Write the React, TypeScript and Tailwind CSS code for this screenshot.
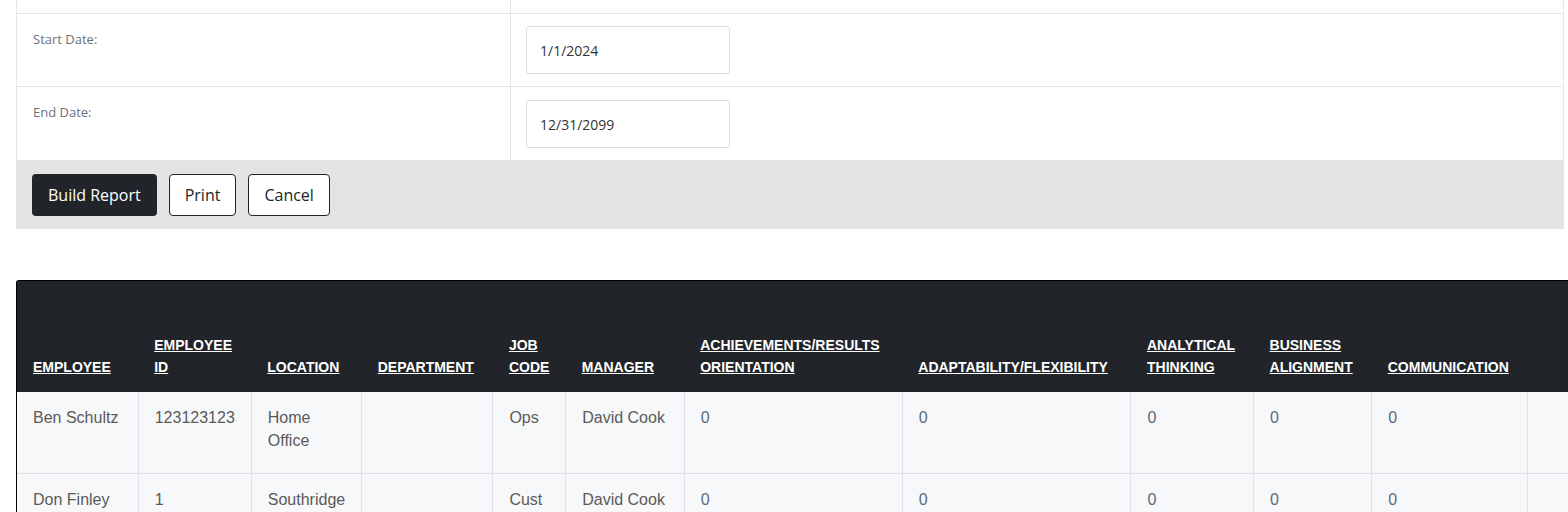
const cols = [
  { w: 128, h: ["EMPLOYEE"] },
  { w: 113, h: ["EMPLOYEE", "ID"] },
  { w: 110, h: ["LOCATION"] },
  { w: 133, h: ["DEPARTMENT"] },
  { w: 73, h: ["JOB", "CODE"] },
  { w: 127, h: ["MANAGER"] },
  { w: 222, h: ["ACHIEVEMENTS/RESULTS", "ORIENTATION"] },
  { w: 233, h: ["ADAPTABILITY/FLEXIBILITY"] },
  { w: 124, h: ["ANALYTICAL", "THINKING"] },
  { w: 120, h: ["BUSINESS", "ALIGNMENT"] },
  { w: 158, h: ["COMMUNICATION"] },
  { w: 120, h: [""] },
];

const rows = [
  ["Ben Schultz", "123123123", "Home Office", "", "Ops", "David Cook", "0", "0", "0", "0", "0", ""],
  ["Don Finley", "1", "Southridge", "", "Cust", "David Cook", "0", "0", "0", "0", "0", ""],
];

export default function App() {
  return (
    <div className="w-[1568px] h-[512px] overflow-hidden bg-white" style={{ fontFamily: "'Open Sans', sans-serif" }}>
      <div className="ml-4 w-[1548px]">
        {/* form rows */}
        <div className="grid grid-cols-[494px_1fr] border-x border-[#e5e5e5]">
          <div className="h-[14px] border-r border-b border-[#e5e5e5]" />
          <div className="h-[14px] border-b border-[#e5e5e5]" />
          <div className="h-[73px] border-r border-b border-[#e5e5e5] px-4 pt-[16px] text-[13px] text-[#6b7280]">Start Date:</div>
          <div className="h-[73px] border-b border-[#e5e5e5] px-[15px] pt-[12px]">
            <div className="w-[204px] h-[48px] border border-[#dcdcdc] rounded-[3px] flex items-center px-[13px] text-[14px] text-[#333]">1/1/2024</div>
          </div>
          <div className="h-[73px] border-r border-[#e5e5e5] px-4 pt-[16px] text-[13px] text-[#6b7280]">End Date:</div>
          <div className="h-[73px] px-[15px] pt-[13px]">
            <div className="w-[204px] h-[48px] border border-[#dcdcdc] rounded-[3px] flex items-center px-[13px] text-[14px] text-[#333]">12/31/2099</div>
          </div>
        </div>
        <div className="h-[69px] bg-[#e4e4e4] flex items-center gap-3 px-4">
          <button className="h-[42px] px-4 rounded bg-[#212529] text-white text-[16px]">Build Report</button>
          <button className="h-[42px] px-[15px] rounded border border-[#212529] bg-white text-[#212529] text-[16px]">Print</button>
          <button className="h-[42px] px-[15px] rounded border border-[#212529] bg-white text-[#212529] text-[16px]">Cancel</button>
        </div>
      </div>

      <div className="ml-4 mt-[51px] w-[1600px] rounded-t-[3px] border-t border-l border-black" style={{ fontFamily: "'Liberation Sans', Arial, sans-serif" }}>
        <table className="border-collapse table-fixed">
          <colgroup>
            {cols.map((c, i) => (
              <col key={i} style={{ width: c.w }} />
            ))}
          </colgroup>
          <thead>
            <tr className="bg-[#212529] h-[111px]">
              {cols.map((c, i) => (
                <th key={i} className="align-bottom text-left px-4 pb-[14px] text-[14px] font-bold text-white leading-[22px] whitespace-nowrap">
                  {c.h.map((l, j) => (
                    <div key={j} className="underline">{l}</div>
                  ))}
                </th>
              ))}
            </tr>
          </thead>
          <tbody>
            {rows.map((r, i) => (
              <tr key={i} className="bg-[#f7f8f9] border-b border-[#dee2e6]">
                {r.map((v, j) => (
                  <td key={j} className={`align-top px-4 pt-[14px] pb-[21px] text-[16px] leading-[23px] border-r border-[#dee2e6] ${j >= 6 ? "text-[#5a6b7e]" : "text-[#5a5a5a]"}`}>
                    {v}
                  </td>
                ))}
              </tr>
            ))}
          </tbody>
        </table>
      </div>
    </div>
  );
}
